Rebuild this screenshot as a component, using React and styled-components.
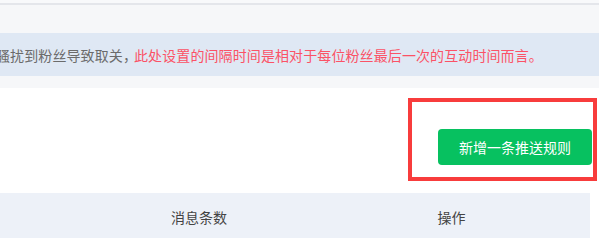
import React from "react";
import styled, { createGlobalStyle } from "styled-components";

let GlobalStyle = createGlobalStyle`
  html, body {
    margin: 0;
    padding: 0;
    background: #ffffff;
    font-family: "Noto Sans CJK SC", "Noto Sans", sans-serif;
  }
`;

let Page = styled.div`
  width: 599px;
  height: 238px;
  overflow: hidden;
  background: #ffffff;
`;

let TopBar = styled.div`
  height: 3px;
  background: #f8f9fb;
  border-bottom: 2px solid #e4e6eb;
`;

let Gray = styled.div`
  background: #f6f7f9;
  padding: 28px 0 12px;
`;

let Notice = styled.div`
  height: 43px;
  display: flex;
  align-items: center;
  background: #dfe8f4;
  font-size: 14px;
  letter-spacing: 0.1px;
  color: #6b6b6b;
  white-space: nowrap;
  overflow: hidden;
`;

let Lead = styled.span`
  margin-left: -4px;
  margin-right: -3px;
`;

let Warn = styled.span`
  color: #fb5266;
`;

let Toolbar = styled.div`
  display: flex;
  justify-content: flex-end;
  padding: 41px 7px 0 0;
`;

let Highlight = styled.div`
  position: relative;
`;

let Frame = styled.div`
  position: absolute;
  left: -30px;
  top: -31px;
  right: -5px;
  bottom: -16px;
  border: 4px solid #f83c3c;
  pointer-events: none;
`;

let Button = styled.button`
  width: 154px;
  height: 36px;
  border: 0;
  border-radius: 4px;
  background: #07c160;
  color: #ffffff;
  font-family: inherit;
  font-size: 14px;
  cursor: pointer;
`;

let Header = styled.div`
  display: grid;
  grid-template-columns: 85px 228px 1fr;
  align-items: center;
  height: 48px;
  margin: 28px 9px 0 0;
  background: #edf1f8;
  font-size: 14px;
  color: #444444;
`;

let Cell = styled.div`
  text-align: center;
`;

export default function App() {
  return (
    <Page>
      <GlobalStyle />
      <TopBar />
      <Gray>
        <Notice>
          <Lead>骚扰到粉丝导致取关，</Lead>
          <Warn>此处设置的间隔时间是相对于每位粉丝最后一次的互动时间而言。</Warn>
        </Notice>
      </Gray>
      <Toolbar>
        <Highlight>
          <Button>新增一条推送规则</Button>
          <Frame />
        </Highlight>
      </Toolbar>
      <Header>
        <Cell />
        <Cell>消息条数</Cell>
        <Cell>操作</Cell>
      </Header>
    </Page>
  );
}
